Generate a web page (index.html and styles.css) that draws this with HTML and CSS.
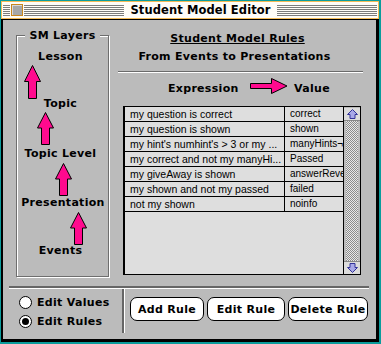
FILE: index.html
```html
<!DOCTYPE html>
<html>
<head>
<meta charset="utf-8">
<link rel="stylesheet" href="styles.css">
</head>
<body>
<div class="window">
  <div class="titlebar">
    <div class="stripes stripes-short"></div>
    <div class="closebox"></div>
    <div class="stripes stripes-mid"></div>
    <div class="title">Student Model Editor</div>
    <div class="stripes stripes-right"></div>
  </div>
  <div class="content">
    <div class="main">
      <div class="layers">
        <div class="group-title">SM Layers</div>
        <div class="layer layer-lesson">Lesson</div>
        <svg class="uparrow ua1" width="17" height="34" viewBox="0 0 17 34"><polygon points="8.5,0.5 16.5,16.5 12.5,16.5 12.5,33.5 4.5,33.5 4.5,16.5 0.5,16.5" fill="#ff0a8e" stroke="#000" stroke-width="1"/></svg>
        <div class="layer layer-topic">Topic</div>
        <svg class="uparrow ua2" width="17" height="33" viewBox="0 0 17 33"><polygon points="8.5,0.5 16.5,16 12.5,16 12.5,32.5 4.5,32.5 4.5,16 0.5,16" fill="#ff0a8e" stroke="#000" stroke-width="1"/></svg>
        <div class="layer layer-tl">Topic Level</div>
        <svg class="uparrow ua3" width="17" height="33" viewBox="0 0 17 33"><polygon points="8.5,0.5 16.5,16 12.5,16 12.5,32.5 4.5,32.5 4.5,16 0.5,16" fill="#ff0a8e" stroke="#000" stroke-width="1"/></svg>
        <div class="layer layer-pres">Presentation</div>
        <svg class="uparrow ua4" width="17" height="33" viewBox="0 0 17 33"><polygon points="8.5,0.5 16.5,16 12.5,16 12.5,32.5 4.5,32.5 4.5,16 0.5,16" fill="#ff0a8e" stroke="#000" stroke-width="1"/></svg>
        <div class="layer layer-events">Events</div>
      </div>
      <div class="right">
        <div class="rules-title">Student Model Rules</div>
        <div class="rules-sub">From Events to Presentations</div>
        <div class="sep"></div>
        <div class="expr-row">
          <span class="expr-label">Expression</span>
          <svg class="rarrow" width="38" height="16" viewBox="0 0 38 16"><polygon points="0.5,5.5 21.5,5.5 21.5,0.5 37,8 21.5,15.5 21.5,10.5 0.5,10.5" fill="#ff0a8e" stroke="#000" stroke-width="1"/></svg>
          <span class="value-label">Value</span>
        </div>
        <div class="table">
          <div class="rows">
            <div class="row"><div class="c1">my question is correct</div><div class="c2">correct</div></div>
            <div class="row"><div class="c1">my question is shown</div><div class="c2">shown</div></div>
            <div class="row"><div class="c1">my hint's numhint's &gt; 3 or my ...</div><div class="c2">manyHints¬</div></div>
            <div class="row"><div class="c1">my correct and not my manyHi...</div><div class="c2">Passed</div></div>
            <div class="row"><div class="c1">my giveAway is shown</div><div class="c2">answerRevealed</div></div>
            <div class="row"><div class="c1">my shown and not my passed</div><div class="c2">failed</div></div>
            <div class="row"><div class="c1">not my shown</div><div class="c2">noinfo</div></div>
          </div>
          <div class="scrollbar">
            <div class="sbtn sbtn-up"><svg width="15" height="12" viewBox="0 0 15 12"><polygon points="7.5,1.5 12.5,6.5 10,6.5 10,10.5 5,10.5 5,6.5 2.5,6.5" fill="#a8a8e8" stroke="#333399" stroke-width="1"/></svg></div>
            <div class="track"></div>
            <div class="sbtn sbtn-down"><svg width="15" height="12" viewBox="0 0 15 12"><polygon points="7.5,10.5 12.5,5.5 10,5.5 10,1.5 5,1.5 5,5.5 2.5,5.5" fill="#a8a8e8" stroke="#333399" stroke-width="1"/></svg></div>
          </div>
        </div>
      </div>
    </div>
    <div class="bottom-sep"></div>
    <div class="controls">
      <div class="radios">
        <div class="radio"><span class="dot"></span><span>Edit Values</span></div>
        <div class="radio radio-2"><span class="dot checked"></span><span>Edit Rules</span></div>
      </div>
      <div class="vsep"></div>
      <div class="buttons">
        <button class="btn btn-add">Add Rule</button>
        <button class="btn btn-edit">Edit Rule</button>
        <button class="btn btn-del">Delete Rule</button>
      </div>
    </div>
  </div>
</div>
</body>
</html>
```

FILE: styles.css
```css
* { box-sizing: border-box; }
html, body { margin: 0; padding: 0; }
body {
  background: #0b9c9c;
  width: 381px;
  height: 344px;
  overflow: hidden;
  font-family: "DejaVu Sans", sans-serif;
  font-weight: bold;
  font-size: 11px;
  letter-spacing: 0.3px;
  color: #000;
}
.window {
  margin: 1px 0 0 1px;
  width: 378px;
  height: 341px;
  display: flex;
  flex-direction: column;
}
.titlebar {
  height: 18px;
  border: 1px solid #f3bb58;
  background: #fffdf8;
  display: flex;
  align-items: center;
  padding: 0 1px;
}
.stripes {
  height: 11px;
  background: repeating-linear-gradient(to bottom, #7c7c7c 0 1px, transparent 1px 2px);
}
.stripes-short { width: 7px; flex: none; }
.stripes-mid { flex: 1; }
.stripes-right { flex: 1; }
.closebox {
  flex: none;
  width: 12px;
  height: 12px;
  margin: 0 1px;
  border: 1px solid #c9861c;
  background: #a7a7a7;
  box-shadow: inset 1px 1px 0 #d8d8d8;
}
.title {
  flex: none;
  padding: 0 6px;
  white-space: nowrap;
  text-align: center;
  font-size: 11.5px;
  letter-spacing: 0.1px;
  line-height: 16px;
}
.content {
  flex: 1;
  background: #bbbbbb;
  border-style: solid;
  border-color: #000;
  border-width: 1px 3px 3px 2px;
  display: flex;
  flex-direction: column;
}
.main {
  display: flex;
  height: 266px;
}
.layers {
  flex: none;
  margin: 15px 0 0 13px;
  width: 93px;
  height: 242px;
  border: 1px solid #6e6e6e;
  box-shadow: 1px 1px 0 #fff, inset 1px 1px 0 #fff;
  display: flex;
  flex-direction: column;
}
.group-title {
  margin: -7px auto 0;
  padding: 0 4px;
  background: #bbbbbb;
  line-height: 13px;
}
.layer {
  line-height: 12px;
  text-align: center;
  white-space: nowrap;
}
.layer-lesson { margin-top: 9px; margin-left: -4px; }
.layer-topic { margin-top: -1px; margin-left: -4px; }
.layer-tl { margin-top: 3px; margin-left: -4px; }
.layer-pres { margin-top: 1px; margin-left: 1px; }
.layer-events { margin-top: 0; margin-left: -4px; }
.uparrow { display: block; }
.ua1 { margin: 2px 0 0 7px; }
.ua2 { margin: 2px 0 0 20px; }
.ua3 { margin: 3px 0 0 38px; }
.ua4 { margin: 3px 0 0 53px; }
.right {
  flex: none;
  margin-left: 9px;
  width: 245px;
  display: flex;
  flex-direction: column;
}
.rules-title {
  margin-top: 12px;
  line-height: 14px;
  text-align: center;
  text-decoration: underline;
  padding-right: 6px;
}
.rules-sub {
  margin-top: 4px;
  line-height: 14px;
  text-align: center;
  padding-right: 12px;
}
.sep {
  margin-top: 7px;
  height: 2px;
  border-top: 1px solid #6b6b6b;
  border-bottom: 1px solid #fff;
}
.expr-row {
  margin-top: 5px;
  height: 16px;
  display: flex;
  align-items: flex-start;
}
.expr-label {
  margin: 4px 0 0 50px;
  width: 82px;
  line-height: 14px;
}
.rarrow { display: block; }
.value-label {
  margin: 4px 0 0 6px;
  line-height: 14px;
}
.table {
  margin: 12px 0 0 5px;
  width: 238px;
  height: 169px;
  border: 1px solid #000;
  border-left-width: 2px;
  display: flex;
  font-family: "Liberation Sans", Arial, sans-serif;
  font-weight: normal;
  font-size: 10.5px;
  letter-spacing: 0;
}
.rows {
  flex: 1;
  min-width: 0;
  background: #dedede;
}
.row {
  display: flex;
  height: 15px;
  border-bottom: 1px solid #000;
  line-height: 14px;
}
.c1 {
  flex: none;
  width: 160px;
  padding-left: 5px;
  border-right: 1px solid #000;
  white-space: nowrap;
  overflow: hidden;
}
.c2 {
  flex: 1;
  min-width: 0;
  padding-left: 5px;
  font-size: 10px;
  white-space: nowrap;
  overflow: hidden;
}
.scrollbar {
  flex: none;
  width: 17px;
  border-left: 1px solid #000;
  display: flex;
  flex-direction: column;
  background: #bbbbbb;
}
.sbtn {
  height: 13px;
  background: #dcdcdc;
  display: flex;
  align-items: center;
  justify-content: center;
}
.sbtn svg { display: block; }
.sbtn-up { margin-top: 1px; border-bottom: 1px solid #888; }
.sbtn-down { border-top: 1px solid #888; }
.track {
  flex: 1;
  margin: 0 2px;
  background: repeating-conic-gradient(#8c8c8c 0 25%, #e8e8e8 0 50%) 0 0 / 2px 2px;
}
.bottom-sep {
  margin: 0 7px 0 6px;
  height: 3px;
  border-top: 2px solid #666;
  border-bottom: 1px solid #fff;
}
.controls {
  display: flex;
  flex: 1;
}
.radios {
  flex: none;
  width: 119px;
  padding: 7px 0 0 16px;
}
.radio {
  display: flex;
  align-items: center;
  height: 13px;
  line-height: 13px;
  white-space: nowrap;
}
.radio-2 { margin-top: 6px; }
.dot {
  flex: none;
  width: 13px;
  height: 13px;
  border: 1px solid #000;
  border-radius: 50%;
  background: #fff;
  margin-right: 5px;
  display: flex;
  align-items: center;
  justify-content: center;
}
.dot.checked::after {
  content: "";
  width: 7px;
  height: 7px;
  border-radius: 50%;
  background: #000;
}
.vsep {
  flex: none;
  width: 3px;
  height: 44px;
  border-left: 2px solid #666;
  border-right: 1px solid #fff;
}
.buttons {
  display: flex;
  gap: 3px;
  margin: 8px 0 0 5px;
  height: 24px;
}
.btn {
  flex: none;
  height: 24px;
  border: 1px solid #000;
  border-radius: 7px;
  background: #fff;
  font-family: "DejaVu Sans", sans-serif;
  font-weight: bold;
  font-size: 11px;
  letter-spacing: 0.3px;
  color: #000;
  padding: 0;
  text-align: center;
  white-space: nowrap;
}
.btn-add { width: 74px; }
.btn-edit { width: 78px; }
.btn-del { width: 80px; }
```
